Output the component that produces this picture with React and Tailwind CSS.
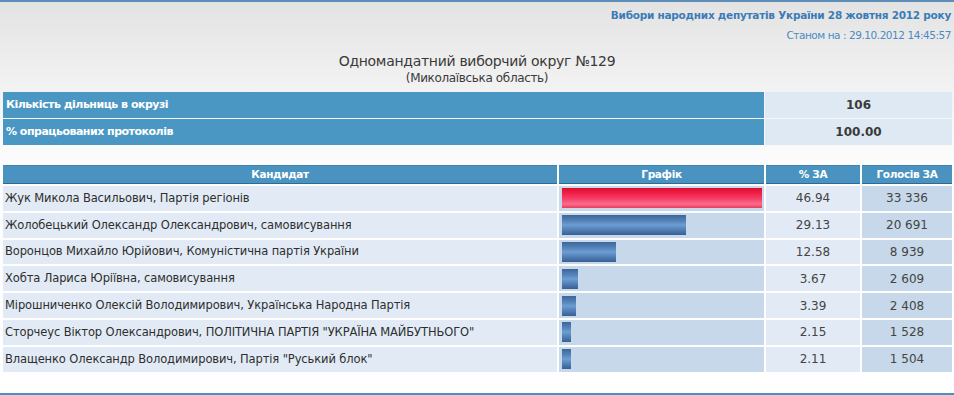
import React from "react";

const rows = [
  ["Жук Микола Васильович, Партія регіонів", 46.94, "33 336", true],
  ["Жолобецький Олександр Олександрович, самовисування", 29.13, "20 691"],
  ["Воронцов Михайло Юрійович, Комуністична партія України", 12.58, "8 939"],
  ["Хобта Лариса Юріївна, самовисування", 3.67, "2 609"],
  ["Мірошниченко Олексій Володимирович, Українська Народна Партія", 3.39, "2 408"],
  ["Сторчеус Віктор Олександрович, ПОЛІТИЧНА ПАРТІЯ \"УКРАЇНА МАЙБУТНЬОГО\"", 2.15, "1 528"],
  ["Влащенко Олександр Володимирович, Партія \"Руський блок\"", 2.11, "1 504"],
];

export default function App() {
  return (
    <div
      className="w-[954px] h-[395px] overflow-hidden flex flex-col bg-[linear-gradient(to_bottom,#e3e3e3_0px,#f3f3f3_90px,#fcfcfc_160px,#ffffff_395px)] border-t-2 border-[#5b8db8] text-[#333]"
      style={{ fontFamily: '"DejaVu Sans", Verdana, sans-serif' }}
    >
      <div className="flex flex-col items-end pr-[3px] pt-[6px]">
        <div className="text-[10.5px] font-bold text-[#3b7cb8] tracking-[-0.25px] leading-[14px]">
          Вибори народних депутатів України 28 жовтня 2012 року
        </div>
        <div className="text-[10.5px] text-[#4b8ac2] tracking-[-0.45px] leading-[14px] mt-[6px]">
          Станом на : 29.10.2012 14:45:57
        </div>
      </div>
      <div className="flex flex-col items-center mt-[10px]">
        <div className="text-[14px] text-[#3a3a3a] leading-[18px] tracking-[-0.3px]">
          Одномандатний виборчий округ №129
        </div>
        <div className="text-[12px] text-[#3a3a3a] leading-[15px] tracking-[-0.35px] mt-[1px]">
          (Миколаївська область)
        </div>
      </div>

      <div className="ml-[3px] mt-[6px] w-[949px] grid grid-cols-[761px_187px] gap-[1px] text-[11px] font-bold">
        <div className="h-[26px] bg-[#4b97c4] text-white flex items-center pl-[3px] tracking-[-0.5px]">
          Кількість дільниць в окрузі
        </div>
        <div className="h-[26px] bg-[#dfe9f3] flex items-center justify-center text-[12px] text-[#3a3a3a]">
          106
        </div>
        <div className="h-[26px] bg-[#4b97c4] text-white flex items-center pl-[3px] tracking-[-0.5px]">
          % опрацьованих протоколів
        </div>
        <div className="h-[26px] bg-[#dfe9f3] flex items-center justify-center text-[12px] text-[#3a3a3a]">
          100.00
        </div>
      </div>

      <div className="ml-[3px] mt-[20px] w-[949px] grid grid-cols-[554px_205px_94px_90px] gap-x-[2px] gap-y-[2px] text-[11px]">
        {["Кандидат", "Графік", "% ЗА", "Голосів ЗА"].map((h) => (
          <div
            key={h}
            className="h-[19px] bg-[#4a93c0] border-t border-b border-t-[#3f86b3] border-b-[#2f6a92] text-white font-bold text-[10.5px] flex items-center justify-center tracking-[-0.35px]"
          >
            {h}
          </div>
        ))}
        {rows.map(([name, pct, votes, red]) => (
          <React.Fragment key={name}>
            <div className="h-[24.8px] bg-[#e2ebf5] flex items-center pl-[2px] text-[11.5px] text-[#2e2e2e] tracking-[-0.12px] whitespace-nowrap">
              {name}
            </div>
            <div className="h-[24.8px] bg-[#c6d8ea] flex items-center pl-[3px]">
              <div
                className={
                  red
                    ? "h-[20px] bg-[linear-gradient(to_bottom,#d60f33_0%,#f0193f_20%,#f6416a_55%,#f86d8c_80%,#e93a5e_100%)]"
                    : "h-[20px] bg-[linear-gradient(to_bottom,#3b6699_0%,#5584bb_30%,#6e9dd1_50%,#5584bb_70%,#395f91_100%)]"
                }
                style={{ width: `${(pct / 46.94) * 200}px` }}
              />
            </div>
            <div className="h-[24.8px] bg-[#e2ebf5] flex items-center justify-center text-[12px] text-[#444]">
              {pct.toFixed(2)}
            </div>
            <div className="h-[24.8px] bg-[#c6d8ea] flex items-center justify-center text-[12px] text-[#444]">
              {votes}
            </div>
          </React.Fragment>
        ))}
      </div>
      <div className="flex-1" />
      <div className="h-[2px] bg-[#4a90c0]" />
    </div>
  );
}
